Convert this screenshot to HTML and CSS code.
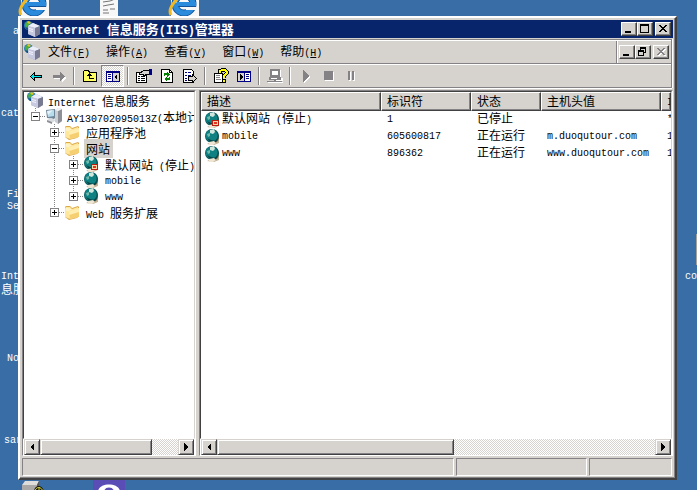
FILE: index.html
```html
<!DOCTYPE html>
<html lang="zh-CN">
  <head>
    <meta charset="UTF-8" />
    <meta name="viewport" content="width=device-width, initial-scale=1.0" />
    <title>Internet 信息服务(IIS)管理器</title>
    <link rel="stylesheet" href="styles.css">
  </head>
  <body>
    <!-- shared icons -->
    <svg class="sprite" aria-hidden="true">
      <symbol id="server" viewBox="0 0 16 16">
        <path fill="#d6dbe2" d="M5 3l5-2 5 2v10l-5 3-5-3z" />
        <path fill="#8f939e" d="M10 5l5-2v10l-5 3z" />
      </symbol>
      <symbol id="iis" viewBox="0 0 16 16">
        <circle cx="4.500" cy="4.500" r="4.500" fill="#2b7fb5" />
        <path fill="#4caf3a" d="M1 3l3-3 2 2-2 3-2 2z" />
        <path fill="#e7c321" d="M3 1l2-1 2 2-2 1z" />
        <path fill="#184f84" d="M1 6l3 1 1 2H3z" />
        <path fill="#a5a8bb" d="M4 5l5-3 7 3v8l-5 3-7-3z" />
        <path fill="#eceefa" d="M4 5l5-3 7 3-5 2z" />
        <path fill="#c6c9df" d="M4 5l7 2v9l-7-3z" />
        <path fill="#777a90" d="M11 7l5-2v8l-5 3z" />
        <path fill="#f4f4fc" d="M5 7l4 1v1L5 8zM5 9l4 1v1l-4-1z" />
      </symbol>
      <symbol id="computer" viewBox="0 0 16 16">
        <path fill="#6f8798" d="M0 2l9-1 1 8-2 2-7-1z" />
        <path fill="#b9dcec" d="M1 3l7-1v6l-6 1z" />
        <path fill="#e5f4fa" d="M1 3l6-1-5 5z" />
        <path fill="#d9dce0" d="M1 12l4-2 5 2-4 3z" />
        <path fill="#8c9096" d="M1 12l5 2v2l-5-2z" />
        <path fill="#cbced3" d="M9 2l3-2 4 1v12l-4 3-3-2z" />
        <path fill="#8d9197" d="M12 3l4-2v12l-4 3z" />
        <path fill="#f3f4f5" d="M9 2l3-2 4 1-4 2z" />
      </symbol>
      <symbol id="folder" viewBox="0 0 16 16">
        <path fill="#dba84a" d="M0 3l1-1h4l2 2 6-2 1 1v9l-2 2-8 2-4-3z" />
        <path fill="#ffe79c" d="M0 4l1-1h4l2 2 6-2v10l-8 2-5-2z" />
        <path fill="#fff3c4" d="M1 4h3l3 2v2L1 7z" />
        <path fill="#f7cf73" d="M4 7l10-3v9l-9 2z" />
        <path fill="#ffeeb0" d="M4 7l10-3v4L4 11z" />
      </symbol>
      <symbol id="globe" viewBox="0 0 16 16">
        <path fill="#c6b294" d="M11 1l3 5v8l-5 2-7-1 6-3z" />
        <path fill="#7b6950" d="M12 3l2 4-1 5-4 3-4-1 6-3z" />
        <circle cx="7" cy="7" r="7" fill="#07575a" />
        <circle cx="6.500" cy="6.500" r="6" fill="#108182" />
        <path fill="#d2e5dd" d="M5 1l4-1 1 3-2 2-3-1z" />
        <path fill="#75b9ac" d="M2 5l3-1v3l-2 1z" />
        <path fill="#084243" d="M2 9l4 2 4 1 3-3-2 4-5 1z" />
        <path fill="#eee6d2" d="M4 13l5-1 2 2-3 2H4z" />
      </symbol>
      <symbol id="globe-stopped" viewBox="0 0 16 16">
        <use href="#globe" />
        <path fill="#bd1c10" d="M7 8h7v6H7z" />
        <path fill="#f7d6a5" d="M8 9h5v4H8z" />
        <path fill="#e7331d" d="M9 10h3v2H9z" />
      </symbol>
      <symbol id="ie" viewBox="0 0 32 32">
        <path fill="#f7f7f7" d="M3 0h28v32H3z" />
        <circle cx="16" cy="20" r="9" fill="none" stroke="#12549c" stroke-width="7" />
        <circle cx="16" cy="20" r="9" fill="none" stroke="#2a8bdc" stroke-width="5" />
        <path fill="#2a8bdc" d="M8 18h20v4H8z" />
        <path fill="#12549c" d="M11 22h17v1H11z" />
        <path fill="#f7f7f7" d="M18 23h13v3H18z" />
        <path fill="none" stroke="#72c5f2" stroke-width="2" d="M8 19a8 8 0 0 1 12-7" />
        <path fill="none" stroke="#f2b824" stroke-width="3" d="M3 31C-1 24 10 10 27 5" />
      </symbol>
      <symbol id="min" viewBox="0 0 16 14">
        <path d="M4 9h6v2H4z" />
      </symbol>
      <symbol id="max" viewBox="0 0 16 14">
        <path fill-rule="evenodd" d="M3 2h9v9H3zM4 4v6h7V4z" />
      </symbol>
      <symbol id="restore" viewBox="0 0 16 14">
        <path fill-rule="evenodd" d="M5 2h6v6H9v3H3V5h2zM6 4v1h3v2h1V4zM4 7v3h4V7z" />
      </symbol>
      <symbol id="close" viewBox="0 0 16 14">
        <path d="M4 3h2v1h1v1h2V4h1V3h2v1h-1v1h-1v1H9v1h1v1h1v1h1v1h-2V9H9V8H7v1H6v1H4V9h1V8h1V7h1V6H6V5H5V4H4z" />
      </symbol>
      <symbol id="left" viewBox="0 0 8 8"><path d="M2 4l4-4v8z" /></symbol>
      <symbol id="right" viewBox="0 0 8 8"><path d="M6 4L2 0v8z" /></symbol>
    </svg>

    <div class="desktop">
      <svg class="shortcut ie-one"><use href="#ie" /></svg>
      <svg class="shortcut notes" viewBox="0 0 18 32">
        <path fill="#f7f7f7" d="M0 0h18v32H0z" />
        <path fill="none" stroke="#737573" d="M3 18l7-1 5-2M3 22l5-1 6-1M3 26h5M10 25h5M3 29h6" />
      </svg>
      <svg class="shortcut ie-two"><use href="#ie" /></svg>
      <svg class="shortcut drive" viewBox="0 0 22 12">
        <path fill="#deddda" d="M3 1h14l-2 4H0z" />
        <path fill="#aaa9a8" d="M0 5h15v7H0z" />
        <path fill="#555" d="M17 1v6l-2 5V5z" />
        <path fill="#161608" d="M12 12c0-8 9-8 10 0z" />
        <path fill="none" stroke="#d7d441" d="M13 12c0-6 7-6 8 0M17 7v5" />
      </svg>
      <svg class="shortcut purple" viewBox="0 0 32 12">
        <path fill="#5a4db5" d="M0 0h32v12H0z" />
        <path fill="#fff" d="M5 12c0-10 22-10 22 0z" />
        <path fill="#5a4db5" d="M11 12c0-6 10-6 10 0z" />
      </svg>
      <a href="#" class="label label-a">a</a>
      <a href="#" class="label label-cat">cat</a>
      <a href="#" class="label label-fi">Fi<br />Se</a>
      <a href="#" class="label label-int">Int<br /><span class="zh">息服</span></a>
      <a href="#" class="label label-no">No</a>
      <a href="#" class="label label-sar">sar</a>
      <a href="#" class="label label-co">co</a>
      <span class="edge"></span>

      <main class="window">
        <header class="titlebar">
          <svg class="icon"><use href="#iis" /></svg>
          <h1>Internet <span class="zh">信息服务</span>(IIS)<span class="zh">管理器</span></h1>
          <div class="controls">
            <button class="control" aria-label="最小化"><svg><use href="#min" /></svg></button>
            <button class="control" aria-label="最大化"><svg><use href="#max" /></svg></button>
            <button class="control apart" aria-label="关闭"><svg><use href="#close" /></svg></button>
          </div>
        </header>

        <div class="rebar">
          <nav class="menubar">
            <svg class="icon"><use href="#iis" /></svg>
            <button class="menu"><span class="zh">文件</span>(<u>F</u>)</button>
            <button class="menu"><span class="zh">操作</span>(<u>A</u>)</button>
            <button class="menu"><span class="zh">查看</span>(<u>V</u>)</button>
            <button class="menu"><span class="zh">窗口</span>(<u>W</u>)</button>
            <button class="menu"><span class="zh">帮助</span>(<u>H</u>)</button>
            <div class="controls child">
              <button class="control" aria-label="最小化"><svg><use href="#min" /></svg></button>
              <button class="control" aria-label="还原"><svg><use href="#restore" /></svg></button>
              <button class="control apart" aria-label="关闭" disabled><svg><use href="#close" /></svg></button>
            </div>
          </nav>

          <div class="toolbar">
            <button class="tool" aria-label="后退">
              <svg viewBox="0 0 16 16"><path fill="#00e7ef" stroke="#000" d="M2.500 8.500l4-4v3h7v2h-7v3z" /></svg>
            </button>
            <button class="tool" aria-label="前进" disabled>
              <svg viewBox="0 0 16 16"><path fill="#fff" d="M3 8h7V5l5 5-4 4v-3H3z" /><path fill="#848284" d="M2 7h7V4l5 4-5 5v-3H2z" /></svg>
            </button>
            <span class="sep"></span>
            <button class="tool" aria-label="向上">
              <svg viewBox="0 0 16 16"><path fill="#ffff63" stroke="#000" d="M1.500 13.500v-10l1-1h4l1 2h7v9z" /><path d="M7 5h1v1h1v1h1v1H8v2h4v1H7V8H5V7h1V6h1z" /></svg>
            </button>
            <button class="tool pressed" aria-label="显示控制台树">
              <svg viewBox="0 0 16 16"><path fill="#fff" stroke="#000084" d="M1.500 3.500h13v10h-13z" /><path fill="#000084" d="M1 3h14v2H1zM7 5h1v9H7zM3 6h3v1H3zM3 8h3v1H3zM3 10h3v1H3z" /><path fill="#d6d3ce" d="M8 5h6v8H8z" /><path d="M9 9l3-3v6z" /></svg>
            </button>
            <span class="sep"></span>
            <button class="tool" aria-label="属性">
              <svg viewBox="0 0 16 16"><path fill="#fff" stroke="#000" d="M.500 4.500h10v10H.500z" /><path fill="#000" d="M2 8h2v1H2zM5 8h4v1H5zM2 10h2v1H2zM5 10h4v1H5zM2 12h2v1H2zM5 12h4v1H5z" /><path fill="#d6d3ce" stroke="#000" d="M3.500 5.500l4-3h6v4h-3l-2 1-2-1H4z" /><path fill="#000084" d="M13 1h3v6h-3z" /></svg>
            </button>
            <button class="tool" aria-label="刷新">
              <svg viewBox="0 0 16 16"><path fill="#fff" stroke="#000" d="M2.500 1.500h8l3 3v10h-11z" /><path fill="none" stroke="#000" d="M10.500 1.500v3h3" /><path fill="#008200" d="M5 7V5h3V4l3 2-3 3V7H6v1H5zM11 9v3H8v1l-3-2 3-3v2h2V9z" /></svg>
            </button>
            <button class="tool" aria-label="导出列表">
              <svg viewBox="0 0 16 16"><path fill="#fff" stroke="#000" d="M1.500 1.500h8l2 2v11h-10z" /><path fill="#000084" d="M3 4h2v1H3zM6 4h3v1H6zM3 7h2v1H3zM6 7h3v1H6zM3 10h2v1H3zM3 12h2v1H3z" /><path fill="#d6d3ce" stroke="#000" d="M6.500 8.500h4v-2l4 4-4 4v-2h-4z" /></svg>
            </button>
            <span class="sep"></span>
            <button class="tool" aria-label="帮助">
              <svg viewBox="0 0 16 16"><path fill="#fff" stroke="#000" d="M1.500 5.500h8v9h-8z" /><path fill="#848284" d="M3 7h4v1H3zM3 9h4v1H3zM3 11h5v1H3z" /><path fill="none" stroke="#000" stroke-width="4" d="M7 5V3l2-1h3l2 2v1l-3 3v2" /><path fill="none" stroke="#ffff00" stroke-width="2" d="M7 5V3l2-1h3l2 2v1l-3 3v2" /><path d="M9 11h4v4H9z" /><path fill="#ffff00" d="M10 12h2v2h-2z" /></svg>
            </button>
            <button class="tool" aria-label="操作窗格">
              <svg viewBox="0 0 16 16"><path fill="#fff" stroke="#000084" d="M1.500 3.500h13v10h-13z" /><path fill="#000084" d="M1 3h14v2H1zM8 5h1v9H8zM10 6h3v1h-3zM10 8h3v1h-3zM10 10h3v1h-3z" /><path fill="#d6d3ce" d="M2 5h6v8H2z" /><path d="M4 6l3 3-3 3z" /></svg>
            </button>
            <span class="sep"></span>
            <button class="tool" aria-label="连接" disabled>
              <svg viewBox="0 0 16 16"><path fill="#fff" d="M4 2h10v8h2v3h-4v1h4v1H1v-2h6v-1H2V9h2z" /><path fill="#848284" fill-rule="evenodd" d="M3 1h10v8h1v3H9v1h6v1H0v-1h7v-1H2V9h1zM5 3v4h6V3zM4 10v1h6v-1z" /></svg>
            </button>
            <span class="sep"></span>
            <button class="tool" aria-label="启动" disabled>
              <svg viewBox="0 0 16 16"><path fill="#fff" d="M6 3l6 6-6 6z" /><path fill="#848284" d="M5 2l6 6-6 6z" /></svg>
            </button>
            <button class="tool" aria-label="停止" disabled>
              <svg viewBox="0 0 16 16"><path fill="#fff" d="M4 4h9v9H4z" /><path fill="#848284" d="M3 3h9v9H3z" /></svg>
            </button>
            <button class="tool" aria-label="暂停" disabled>
              <svg viewBox="0 0 16 16"><path fill="#fff" d="M5 4h2v9H5zM9 4h2v9H9z" /><path fill="#848284" d="M4 3h2v9H4zM8 3h2v9H8z" /></svg>
            </button>
          </div>
        </div>

        <div class="panes">
          <section class="pane">
            <div class="view tree">
              <div class="node root">
                <svg class="icon"><use href="#iis" /></svg>
                <a href="#">Internet <span class="zh">信息服务</span></a>
              </div>
              <ul>
                <li>
                  <div class="node">
                    <button class="expander open" aria-label="折叠"></button>
                    <svg class="icon"><use href="#computer" /></svg>
                    <a href="#">AY130702095013Z(<span class="zh">本地计</span></a>
                  </div>
                  <ul>
                    <li>
                      <div class="node">
                        <button class="expander" aria-label="展开"></button>
                        <svg class="icon"><use href="#folder" /></svg>
                        <a href="#"><span class="zh">应用程序池</span></a>
                      </div>
                    </li>
                    <li>
                      <div class="node">
                        <button class="expander open" aria-label="折叠"></button>
                        <svg class="icon"><use href="#folder" /></svg>
                        <a href="#" class="selected"><span class="zh">网站</span></a>
                      </div>
                      <ul>
                        <li>
                          <div class="node">
                            <button class="expander" aria-label="展开"></button>
                            <svg class="icon"><use href="#globe-stopped" /></svg>
                            <a href="#"><span class="zh">默认网站</span> (<span class="zh">停止</span>)</a>
                          </div>
                        </li>
                        <li>
                          <div class="node">
                            <button class="expander" aria-label="展开"></button>
                            <svg class="icon"><use href="#globe" /></svg>
                            <a href="#">mobile</a>
                          </div>
                        </li>
                        <li>
                          <div class="node">
                            <button class="expander" aria-label="展开"></button>
                            <svg class="icon"><use href="#globe" /></svg>
                            <a href="#">www</a>
                          </div>
                        </li>
                      </ul>
                    </li>
                    <li>
                      <div class="node">
                        <button class="expander" aria-label="展开"></button>
                        <svg class="icon"><use href="#folder" /></svg>
                        <a href="#">Web <span class="zh">服务扩展</span></a>
                      </div>
                    </li>
                  </ul>
                </li>
              </ul>
            </div>
            <div class="scrollbar">
              <button class="arrow" aria-label="向左"><svg><use href="#left" /></svg></button>
              <div class="track"><div class="thumb" style="width: 81%"></div></div>
              <button class="arrow" aria-label="向右"><svg><use href="#right" /></svg></button>
            </div>
          </section>

          <section class="pane">
            <div class="view">
              <table class="sites">
                <colgroup>
                  <col class="col-name" />
                  <col class="col-id" />
                  <col class="col-state" />
                  <col class="col-host" />
                  <col />
                </colgroup>
                <thead>
                  <tr>
                    <th><span class="zh">描述</span></th>
                    <th><span class="zh">标识符</span></th>
                    <th><span class="zh">状态</span></th>
                    <th><span class="zh">主机头值</span></th>
                    <th>I</th>
                  </tr>
                </thead>
                <tbody>
                  <tr>
                    <td><div class="name"><svg class="icon"><use href="#globe-stopped" /></svg><span><span class="zh">默认网站</span> (<span class="zh">停止</span>)</span></div></td>
                    <td>1</td>
                    <td><span class="zh">已停止</span></td>
                    <td></td>
                    <td>*</td>
                  </tr>
                  <tr>
                    <td><div class="name"><svg class="icon"><use href="#globe" /></svg><span>mobile</span></div></td>
                    <td>605600817</td>
                    <td><span class="zh">正在运行</span></td>
                    <td>m.duoqutour.com</td>
                    <td>1</td>
                  </tr>
                  <tr>
                    <td><div class="name"><svg class="icon"><use href="#globe" /></svg><span>www</span></div></td>
                    <td>896362</td>
                    <td><span class="zh">正在运行</span></td>
                    <td>www.duoqutour.com</td>
                    <td>1</td>
                  </tr>
                </tbody>
              </table>
            </div>
            <div class="scrollbar">
              <button class="arrow" aria-label="向左"><svg><use href="#left" /></svg></button>
              <div class="track"><div class="thumb" style="width: 54%"></div></div>
              <button class="arrow" aria-label="向右"><svg><use href="#right" /></svg></button>
            </div>
          </section>
        </div>

        <footer class="statusbar">
          <div class="status"></div>
          <div class="status"></div>
          <div class="status"></div>
        </footer>
      </main>
    </div>
  </body>
</html>
```
FILE: styles.css
```css
:root {
  --face: #d6d3ce;
  --shadow: #848284;
  --dark: #424142;
  --title: #08246b;
  --desktop: #396da5;
}
* {
  box-sizing: border-box;
}
body {
  margin: 0;
  font-family: "Liberation Mono", "Noto Sans CJK SC", monospace;
  font-size: 10px;
  line-height: 16px;
  color: #000;
  background: var(--desktop);
}
/* Chinese glyphs are two Latin cells wide */
.zh {
  font-family: "Noto Sans CJK SC", sans-serif;
  font-size: 12px;
  line-height: 1;
}
button {
  font: inherit;
  color: inherit;
  padding: 0;
  border: none;
  background: none;
}
a {
  color: inherit;
  text-decoration: none;
}
svg {
  display: block;
  flex: none;
}
.sprite {
  position: absolute;
  width: 0;
  height: 0;
}
.icon {
  width: 16px;
  height: 16px;
}

/* desktop */
.desktop {
  position: relative;
  height: 100vh;
  overflow: hidden;
}
.shortcut,
.label,
.edge {
  position: absolute;
}
.ie-one,
.ie-two {
  top: -16px;
  width: 32px;
  height: 32px;
}
.ie-one {
  left: 18px;
}
.ie-two {
  left: 168px;
}
.notes {
  left: 100px;
  top: -16px;
  width: 18px;
  height: 32px;
}
.drive {
  left: 22px;
  bottom: -2px;
  width: 22px;
  height: 12px;
}
.purple {
  left: 93px;
  bottom: -2px;
  width: 32px;
  height: 12px;
}
.label {
  color: #fff;
  line-height: 12px;
}
.label-a {
  left: 13px;
  top: 26px;
}
.label-cat {
  left: 1px;
  top: 108px;
}
.label-fi {
  left: 7px;
  top: 189px;
}
.label-int {
  left: 1px;
  top: 271px;
}
.label-no {
  left: 7px;
  top: 353px;
}
.label-sar {
  left: 4px;
  top: 435px;
}
.label-co {
  right: 0;
  top: 271px;
}
.edge {
  right: 0;
  top: 234px;
  width: 1px;
  height: 31px;
  background: #a5a29c;
}

/* window frame */
.window {
  position: absolute;
  inset: 16px 20px 10px 18px;
  display: flex;
  flex-direction: column;
  padding: 2px;
  background: var(--face);
  border: 2px solid;
  border-color: #fff var(--dark) var(--dark) #fff;
  box-shadow: inset -1px -1px var(--shadow);
}
.titlebar {
  display: flex;
  align-items: center;
  height: 18px;
  padding: 0 2px;
  color: #fff;
  background: var(--title);
}
h1 {
  flex: 1;
  margin: 0 0 0 2px;
  padding-top: 2px;
  font-size: 12px;
  line-height: 16px;
  white-space: nowrap;
}
h1 .zh {
  font-size: 13px;
}
.controls {
  display: flex;
  align-items: center;
}
.control {
  width: 16px;
  height: 14px;
  background: var(--face);
  border: 1px solid;
  border-color: #fff var(--dark) var(--dark) #fff;
  box-shadow: inset -1px -1px var(--shadow);
}
.control svg {
  width: 16px;
  height: 14px;
  margin: -1px;
  fill: #000;
  shape-rendering: crispEdges;
}
.control:disabled svg {
  fill: var(--shadow);
  filter: drop-shadow(1px 1px #fff);
}
.apart {
  margin-left: 2px;
}

/* menu and tools */
.rebar {
  margin: 1px 1px 2px 0;
  border: 1px solid var(--shadow);
  box-shadow: 0 1px #fff, 1px 0 #fff;
}
.menubar,
.toolbar {
  display: flex;
  align-items: center;
  border-top: 1px solid #fff;
}
.menubar {
  height: 24px;
  padding-left: 1px;
  border-bottom: 1px solid var(--shadow);
}
.menu {
  padding: 4px 8px 0;
  line-height: 18px;
  white-space: nowrap;
}
.child {
  align-self: stretch;
  margin-left: auto;
  padding: 0 2px;
  border-left: 1px solid var(--shadow);
  box-shadow: inset 1px 0 #fff;
}
.toolbar {
  height: 23px;
  padding-left: 1px;
}
.tool {
  display: grid;
  place-items: center;
  width: 23px;
  height: 22px;
}
.tool svg {
  width: 16px;
  height: 16px;
  shape-rendering: crispEdges;
}
.pressed {
  border: 1px solid;
  border-color: var(--shadow) #fff #fff var(--shadow);
}
.pressed,
.track {
  background: repeating-conic-gradient(#fff 0 25%, var(--face) 0 50%) 0 0 / 2px 2px;
}
.sep {
  width: 2px;
  height: 18px;
  margin: 0 3px;
  border-left: 1px solid var(--shadow);
  border-right: 1px solid #fff;
}

/* panes */
.panes {
  flex: 1;
  display: grid;
  grid-template-columns: 174px minmax(0, 1fr);
  gap: 3px;
  min-height: 0;
}
.pane {
  display: flex;
  flex-direction: column;
  min-width: 0;
  background: #fff;
  border: 1px solid;
  border-color: var(--shadow) #fff #fff var(--shadow);
}
.view {
  flex: 1;
  min-height: 0;
  overflow: hidden;
  border: 1px solid;
  border-color: var(--dark) var(--face) #fff var(--dark);
}
.tree {
  padding-left: 3px;
  white-space: nowrap;
}
.tree ul {
  margin: 0;
  padding: 0 0 0 19px;
  list-style: none;
}
.tree > ul {
  padding-left: 4px;
}
.tree li {
  background: repeating-linear-gradient(var(--shadow) 0 1px, transparent 1px 2px) 4px 0 / 1px 100% no-repeat;
}
.tree li:last-child {
  background-size: 1px 8px;
}
.node {
  display: flex;
  align-items: center;
  height: 16px;
  background: repeating-linear-gradient(90deg, var(--shadow) 0 1px, transparent 1px 2px) 9px 8px / 6px 1px no-repeat;
}
.root {
  background: none;
}
.node a {
  margin-left: 3px;
  padding: 4px 3px 0 2px;
  line-height: 12px;
}
.selected {
  background: var(--face);
}
.expander {
  flex: none;
  width: 9px;
  height: 9px;
  margin-right: 6px;
  border: 1px solid var(--shadow);
  background:
    linear-gradient(#000, #000) center / 5px 1px no-repeat,
    linear-gradient(#000, #000) center / 1px 5px no-repeat,
    #fff;
}
.expander.open {
  background: linear-gradient(#000, #000) center / 5px 1px no-repeat, #fff;
}

/* site list */
.sites {
  width: 100%;
  table-layout: fixed;
  border-collapse: separate;
  border-spacing: 0;
  white-space: nowrap;
}
.col-name {
  width: 180px;
}
.col-id {
  width: 90px;
}
.col-state {
  width: 70px;
}
.col-host {
  width: 120px;
}
.sites th,
.sites td {
  height: 17px;
  padding: 0 0 0 6px;
  overflow: hidden;
  text-align: left;
  font-weight: normal;
  line-height: 14px;
}
.sites th {
  height: 16px;
  padding: 2px 0 0 5px;
  line-height: 12px;
  background: var(--face);
  border: 1px solid;
  border-color: #fff var(--dark) var(--dark) #fff;
  box-shadow: inset -1px -1px var(--shadow);
}
.sites td:first-child {
  padding-left: 4px;
}
.name {
  display: flex;
  align-items: center;
  gap: 1px;
}

/* scrollbars */
.scrollbar {
  display: flex;
  height: 16px;
  margin: 0 1px;
}
.arrow {
  display: grid;
  place-items: center;
  width: 16px;
}
.arrow svg {
  width: 8px;
  height: 8px;
  shape-rendering: crispEdges;
}
.arrow,
.thumb {
  height: 16px;
  background: var(--face);
  border: 1px solid;
  border-color: var(--face) var(--dark) var(--dark) var(--face);
  box-shadow: inset 1px 1px #fff, inset -1px -1px var(--shadow);
}
.track {
  flex: 1;
}

/* status bar */
.statusbar {
  display: grid;
  grid-template-columns: minmax(0, 1fr) 131px 83px;
  gap: 2px;
  margin: 2px 1px 0 0;
}
.status {
  height: 18px;
  border: 1px solid;
  border-color: var(--shadow) #fff #fff var(--shadow);
}
```
